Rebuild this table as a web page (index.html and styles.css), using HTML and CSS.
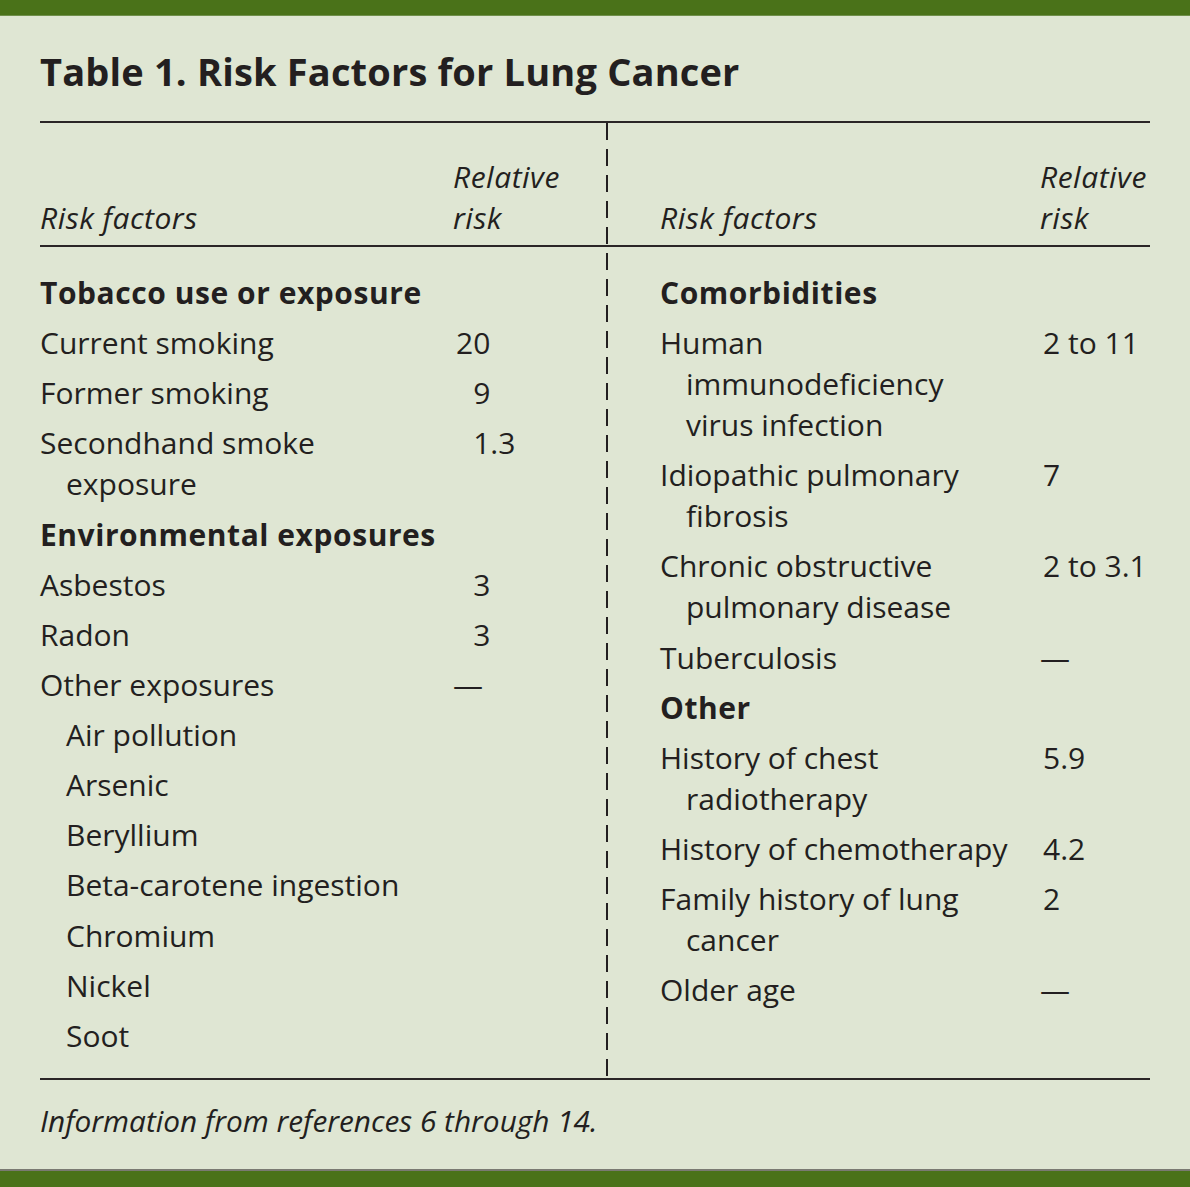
FILE: index.html
```html
<!DOCTYPE html>
<html lang="en">
<head>
<meta charset="utf-8">
<title>Table 1. Risk Factors for Lung Cancer</title>
<link rel="stylesheet" href="styles.css">
</head>
<body>
<div class="topbar"></div>
<main class="sheet">
  <h1 class="title">Table 1. Risk Factors for Lung Cancer</h1>
  <div class="table">
    <section class="half half-left">
      <div class="head">
        <span class="hf">Risk factors</span>
        <span class="hr">Relative<br>risk</span>
      </div>
      <div class="body">
        <div class="row"><span class="f group">Tobacco use or exposure</span></div>
        <div class="row"><span class="f">Current smoking</span><span class="r">20</span></div>
        <div class="row"><span class="f">Former smoking</span><span class="r">&#8199;9</span></div>
        <div class="row"><span class="f">Secondhand smoke exposure</span><span class="r">&#8199;1.3</span></div>
        <div class="row"><span class="f group">Environmental exposures</span></div>
        <div class="row"><span class="f">Asbestos</span><span class="r">&#8199;3</span></div>
        <div class="row"><span class="f">Radon</span><span class="r">&#8199;3</span></div>
        <div class="row"><span class="f">Other exposures</span><span class="r dash">—</span></div>
        <div class="row"><span class="f sub">Air pollution</span></div>
        <div class="row"><span class="f sub">Arsenic</span></div>
        <div class="row"><span class="f sub">Beryllium</span></div>
        <div class="row"><span class="f sub">Beta-carotene ingestion</span></div>
        <div class="row"><span class="f sub">Chromium</span></div>
        <div class="row"><span class="f sub">Nickel</span></div>
        <div class="row"><span class="f sub">Soot</span></div>
      </div>
    </section>
    <section class="half half-right">
      <div class="head">
        <span class="hf">Risk factors</span>
        <span class="hr">Relative<br>risk</span>
      </div>
      <div class="body">
        <div class="row"><span class="f group">Comorbidities</span></div>
        <div class="row"><span class="f">Human immunodeficiency virus infection</span><span class="r">2 to 11</span></div>
        <div class="row"><span class="f">Idiopathic pulmonary fibrosis</span><span class="r">7</span></div>
        <div class="row"><span class="f">Chronic obstructive pulmonary disease</span><span class="r">2 to 3.1</span></div>
        <div class="row"><span class="f">Tuberculosis</span><span class="r dash">—</span></div>
        <div class="row"><span class="f group">Other</span></div>
        <div class="row"><span class="f">History of chest radiotherapy</span><span class="r">5.9</span></div>
        <div class="row"><span class="f">History of chemotherapy</span><span class="r">4.2</span></div>
        <div class="row"><span class="f">Family history of lung cancer</span><span class="r">2</span></div>
        <div class="row"><span class="f">Older age</span><span class="r dash">—</span></div>
      </div>
    </section>
  </div>
  <p class="note">Information from references 6 through 14.</p>
</main>
<div class="bottombar"></div>
</body>
</html>
```
FILE: styles.css
```css
html, body {
  margin: 0;
  padding: 0;
}
body {
  background: #dfe6d3;
  color: #231f20;
  font-family: "Open Sans", "Noto Sans", sans-serif;
  width: 1190px;
  height: 1187px;
  display: flex;
  flex-direction: column;
  overflow: hidden;
}
.topbar {
  height: 15px;
  background: #4a7219;
  border-bottom: 1px solid #6f8f4a;
  flex: none;
}
.sheet {
  padding: 0 40px;
  flex: 1;
}
.title {
  margin: 31px 0 26px;
  font-size: 38px;
  line-height: 48px;
  font-weight: 700;
  letter-spacing: 0.17px;
}
.table {
  display: grid;
  grid-template-columns: 566px 544px;
  border-top: 2px solid #2a2626;
  border-bottom: 2px solid #2a2626;
  font-size: 30px;
  line-height: 41px;
}
.half {
  display: flex;
  flex-direction: column;
}
.half-right {
  padding-left: 54px;
  background-image: repeating-linear-gradient(to bottom, #231f20 0 17px, transparent 17px 26px);
  background-size: 2px 100%;
  background-repeat: no-repeat;
  background-position: left top;
}
.head {
  display: grid;
  grid-template-columns: 413px 1fr;
  align-items: end;
  padding: 33px 0 7px;
  border-bottom: 2px solid #2a2626;
  font-style: italic;
  letter-spacing: 0.5px;
}
.half-right .head {
  grid-template-columns: 380px 1fr;
  margin-left: -54px;
  padding-left: 54px;
}
.body {
  display: flex;
  flex-direction: column;
  gap: 9.14px;
  padding: 25px 0 22px;
}
.row {
  display: grid;
  grid-template-columns: 413px 1fr;
}
.half-right .row {
  grid-template-columns: 380px 1fr;
}
.f {
  padding-left: 26px;
  text-indent: -26px;
  padding-right: 20px;
}
.half-right .f {
  padding-right: 28px;
}
.f.sub {
  padding-left: 26px;
  text-indent: 0;
}
.f.group {
  grid-column: 1 / -1;
  font-weight: 700;
  letter-spacing: 0.55px;
}
.r {
  white-space: nowrap;
}
.half-left .r {
  padding-left: 3px;
}
.half-left .r.dash {
  padding-left: 0;
}
.half-right .r {
  padding-left: 3px;
}
.half-right .r.dash {
  padding-left: 0;
}
.note {
  margin: 20px 0 0;
  font-style: italic;
  font-size: 29.8px;
  line-height: 41px;
}
.bottombar {
  flex: none;
  height: 16px;
  background: #4a7219;
  border-top: 2px solid #7a7a72;
}
```
